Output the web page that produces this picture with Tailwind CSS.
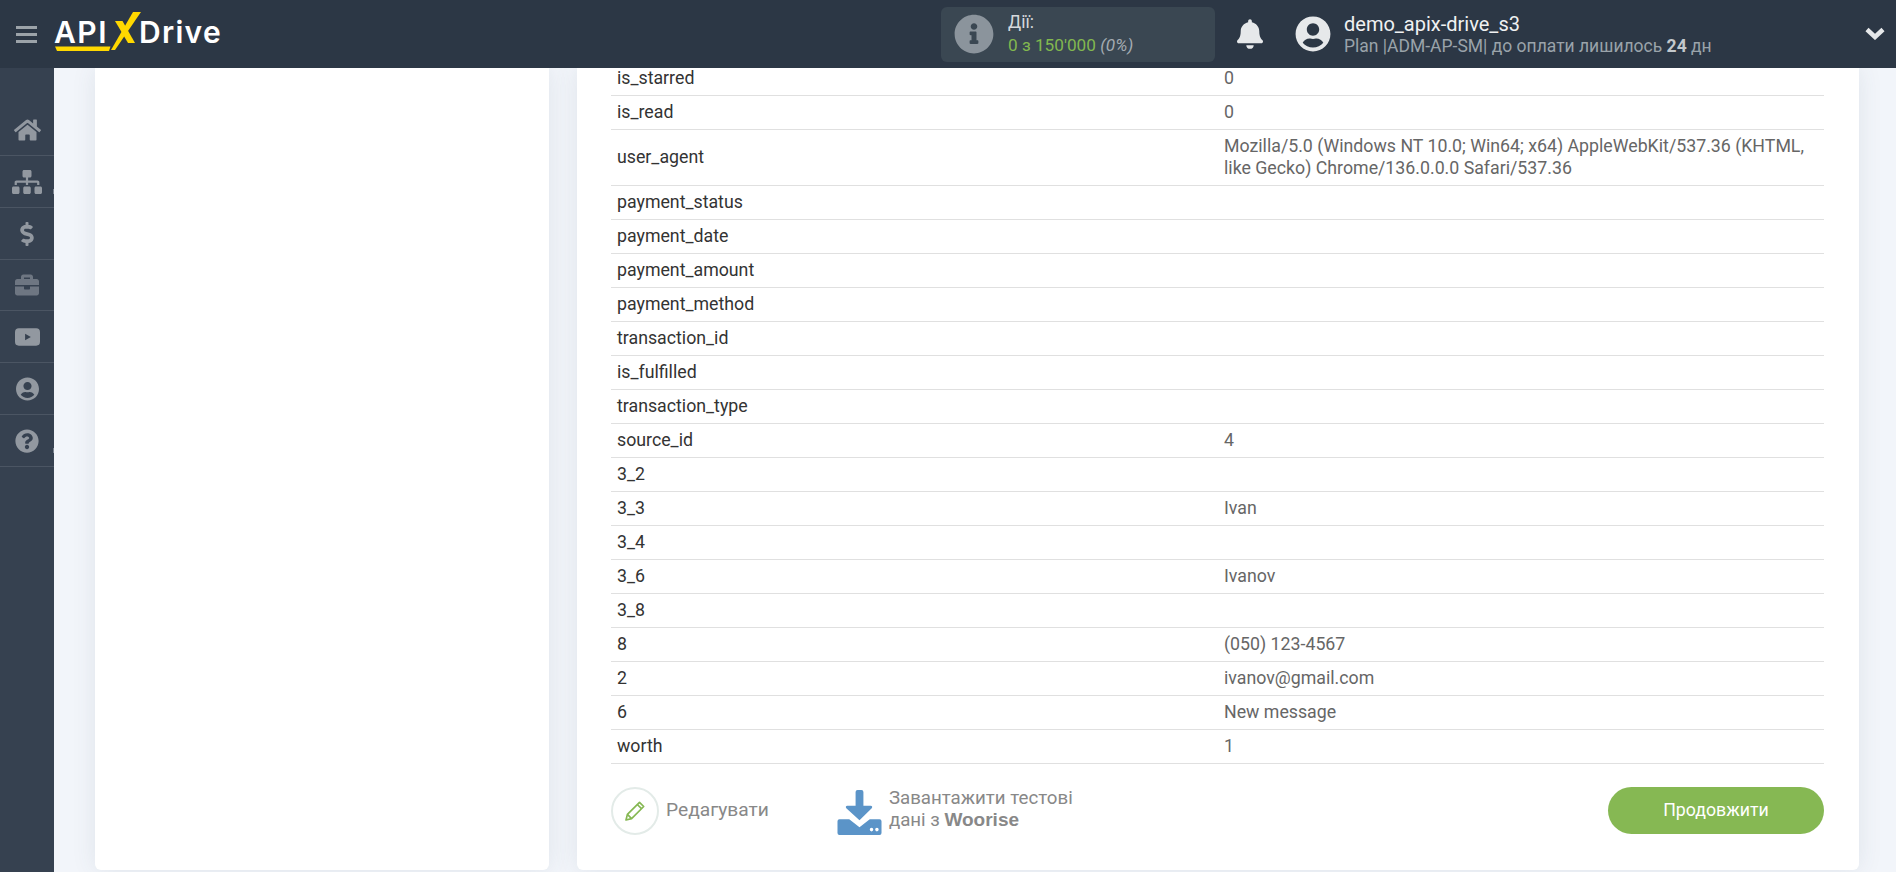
<!DOCTYPE html>
<html lang="uk">
<head>
    <meta charset="UTF-8">
    <title>ApiX-Drive</title>
    <script src="https://cdn.jsdelivr.net/npm/@tailwindcss/browser@4"></script>
</head>
<body class="h-[872px] overflow-hidden bg-[#f2f5fa] font-['Roboto',sans-serif] text-[16px]">

    <!-- Header -->
    <header class="h-[68px] bg-[#2c3745] flex items-center relative z-10">
        <div class="w-[54px] flex justify-center">
            <div class="w-[21px] flex flex-col gap-[4px] -ml-[1px]">
                <span class="block h-[3px] bg-[#9ca3a9]"></span>
                <span class="block h-[3px] bg-[#9ca3a9]"></span>
                <span class="block h-[3px] bg-[#9ca3a9]"></span>
            </div>
        </div>
        <!-- Logo -->
        <div class="relative w-[170px] h-[68px]">
            <span class="absolute left-0 top-[14px] font-['Inter',sans-serif] font-semibold text-[30px] leading-[36px] tracking-[1.5px] text-white">API</span>
            <span class="absolute left-[85px] top-[14px] font-['Inter',sans-serif] font-semibold text-[30px] leading-[36px] tracking-[1.300px] text-white">Drive</span>
            <svg class="absolute left-0 top-0" width="100" height="68" viewBox="0 0 100 68">
                <path d="M1 46.500H56.500L55 51H3z" fill="#ffd800"/>
                <path d="M57 50L79 12h8L61 50z" fill="#ffd800"/>
                <path d="M61 21h7.500L81 43h-7z" fill="#ffd800"/>
            </svg>
        </div>

        <!-- Actions counter -->
        <div class="ml-[717px] w-[274px] h-[55px] bg-[#3a4752] rounded-[6px] flex items-center pl-[13px]">
            <svg class="w-[40px] h-[40px]" viewBox="0 0 512 512" fill="#8b949c"><path d="M256 8C119.043 8 8 119.083 8 256c0 136.997 111.043 248 248 248s248-111.003 248-248C504 119.083 392.957 8 256 8zm0 110c23.196 0 42 18.804 42 42s-18.804 42-42 42-42-18.804-42-42 18.804-42 42-42zm56 254c0 6.627-5.373 12-12 12h-88c-6.627 0-12-5.373-12-12v-24c0-6.627 5.373-12 12-12h12v-64h-12c-6.627 0-12-5.373-12-12v-24c0-6.627 5.373-12 12-12h64c6.627 0 12 5.373 12 12v100h12c6.627 0 12 5.373 12 12v24z"/></svg>
            <div class="ml-[14px]">
                <div class="text-[17.500px] leading-[23px] text-[#d5d9dc]">Дії:</div>
                <div class="text-[17.200px] leading-[23px] text-[#82b84f]">0 з 150'000 <span class="italic text-[#a3abb1]">(0%)</span></div>
            </div>
        </div>

        <!-- Bell -->
        <svg class="ml-[22px] w-[26px] h-[30px]" viewBox="0 0 448 512" fill="#e6e8ea"><path d="M224 512c35.32 0 63.97-28.65 63.97-64H160.03c0 35.35 28.65 64 63.97 64zm215.39-149.71c-19.32-20.76-55.47-51.99-55.47-154.29 0-77.7-54.48-139.9-127.94-155.16V32c0-17.67-14.32-32-31.98-32s-31.98 14.33-31.98 32v20.84C118.56 68.1 64.08 130.3 64.08 208c0 102.3-36.15 133.53-55.47 154.29-6 6.45-8.66 14.16-8.61 21.71.11 16.4 12.98 32 32.1 32h383.8c19.12 0 32-15.6 32.1-32 .05-7.55-2.61-15.27-8.61-21.71z"/></svg>

        <!-- User -->
        <svg class="ml-[32px] w-[36px] h-[36px]" viewBox="0 0 496 512" fill="#e6e8ea"><path d="M248 8C111 8 0 119 0 256s111 248 248 248 248-111 248-248S385 8 248 8zm0 96c48.6 0 88 39.4 88 88s-39.4 88-88 88-88-39.4-88-88 39.4-88 88-88zm0 344c-58.7 0-111.3-26.6-146.5-68.2 18.8-35.4 55.6-59.8 98.5-59.8 2.4 0 4.8.4 7.1 1.1 13 4.2 26.6 6.9 40.9 6.9 14.3 0 28-2.7 40.9-6.9 2.3-.7 4.7-1.1 7.1-1.1 42.9 0 79.7 24.4 98.5 59.8C359.3 421.4 306.7 448 248 448z"/></svg>
        <div class="ml-[13px]">
            <div class="text-[20px] leading-[24px] text-[#f0f1f2]">demo_apix-drive_s3</div>
            <div class="text-[17.500px] leading-[21px] text-[#9aa3aa]">Plan |ADM-AP-SM| до оплати лишилось <b class="text-[#c3c8cc]">24</b> дн</div>
        </div>
        <svg class="absolute left-[1865px] top-[27px] w-[20px] h-[13px]" viewBox="0 0 20 13" fill="none" stroke="#e6e8ea" stroke-width="4.5"><path d="M2 2.5l8 7.5 8-7.5"/></svg>
    </header>

    <div class="flex h-[804px]">
        <!-- Sidebar -->
        <aside class="w-[54px] shrink-0 bg-[#364150] pt-[36px]">
            <div class="h-[52px] border-b border-[#4b5563] flex items-center justify-center">
                <svg class="w-[27px] h-[24px]" viewBox="0 0 576 512" fill="#9298a0"><path d="M280.37 148.26L96 300.11V464a16 16 0 0 0 16 16l112.06-.29a16 16 0 0 0 15.92-16V368a16 16 0 0 1 16-16h64a16 16 0 0 1 16 16v95.64a16 16 0 0 0 16 16.05L464 480a16 16 0 0 0 16-16V300L295.67 148.26a12.19 12.19 0 0 0-15.3 0zM571.6 251.47L488 182.56V44.05a12 12 0 0 0-12-12h-56a12 12 0 0 0-12 12v72.61L318.47 43a48 48 0 0 0-61 0L4.34 251.47a12 12 0 0 0-1.6 16.9l25.5 31A12 12 0 0 0 45.15 301l235.22-193.74a12.19 12.19 0 0 1 15.3 0L530.9 301a12 12 0 0 0 16.9-1.6l25.5-31a12 12 0 0 0-1.7-16.93z"/></svg>
            </div>
            <div class="relative h-[52px] border-b border-[#4b5563] flex items-center justify-center">
                <svg class="w-[30px] h-[24px]" viewBox="0 0 640 512" fill="#9298a0"><path d="M128 352H32c-17.67 0-32 14.33-32 32v96c0 17.67 14.33 32 32 32h96c17.67 0 32-14.33 32-32v-96c0-17.67-14.33-32-32-32zm-24-80h192v48h48v-48h192v48h48v-57.59c0-21.17-17.23-38.41-38.41-38.41H344v-64h40c17.67 0 32-14.33 32-32V32c0-17.67-14.33-32-32-32H256c-17.67 0-32 14.33-32 32v96c0 17.67 14.33 32 32 32h40v64H94.41C73.23 224 56 241.23 56 262.41V320h48v-48zm264 80h-96c-17.67 0-32 14.33-32 32v96c0 17.67 14.33 32 32 32h96c17.67 0 32-14.33 32-32v-96c0-17.67-14.33-32-32-32zm240 0h-96c-17.67 0-32 14.33-32 32v96c0 17.67 14.33 32 32 32h96c17.67 0 32-14.33 32-32v-96c0-17.67-14.33-32-32-32z"/></svg>
                <span class="absolute right-0 top-[33px] w-[1px] h-[5px] bg-[#7b8490]"></span>
            </div>
            <div class="h-[52px] border-b border-[#4b5563] flex items-center justify-center">
                <svg class="w-[14px] h-[24px]" viewBox="0 0 288 512" fill="#9298a0"><path d="M209.2 233.4l-108-31.6C88.7 198.2 80 186.5 80 173.5c0-16.3 13.2-29.5 29.5-29.5h66.3c12.2 0 24.2 3.7 34.2 10.5 6.1 4.1 14.3 3.1 19.5-2l34.8-34c7.1-6.9 6.1-18.4-1.8-24.5C238 74.8 207.4 64.1 176 64V16c0-8.8-7.2-16-16-16h-32c-8.8 0-16 7.2-16 16v48h-2.5C45.8 64-5.4 118.7.5 183.6c4.2 46.1 39.4 83.6 83.8 96.6l102.5 30c12.5 3.7 21.2 15.3 21.2 28.3 0 16.3-13.2 29.5-29.5 29.5h-66.3C100 368 88 364.3 78 357.5c-6.1-4.1-14.3-3.1-19.5 2l-34.8 34c-7.1 6.9-6.1 18.4 1.8 24.5 24.5 19.2 55.1 29.9 86.5 30v48c0 8.8 7.2 16 16 16h32c8.8 0 16-7.2 16-16v-48.2c46.6-.9 90.3-28.6 105.7-72.7 21.5-61.6-14.6-124.8-72.5-141.7z"/></svg>
            </div>
            <div class="h-[51px] border-b border-[#4b5563] flex items-center justify-center">
                <svg class="w-[24px] h-[24px]" viewBox="0 0 512 512" fill="#6e7682"><path d="M320 336c0 8.84-7.16 16-16 16h-96c-8.84 0-16-7.16-16-16v-48H0v144c0 25.6 22.4 48 48 48h416c25.6 0 48-22.4 48-48V288H320v48zm144-208h-80V80c0-25.6-22.4-48-48-48H176c-25.6 0-48 22.4-48 48v48H48c-25.6 0-48 22.4-48 48v80h512v-80c0-25.6-22.4-48-48-48zm-144 0H192V96h128v32z"/></svg>
            </div>
            <div class="h-[52px] border-b border-[#4b5563] flex items-center justify-center">
                <svg class="w-[25px] h-[18px]" viewBox="0 0 26 18" fill="#9298a0"><path fill-rule="evenodd" d="M4 0h18a4 4 0 0 1 4 4v10a4 4 0 0 1-4 4H4a4 4 0 0 1-4-4V4a4 4 0 0 1 4-4zm6.500 5.500v7l6-3.500z"/></svg>
            </div>
            <div class="h-[52px] border-b border-[#4b5563] flex items-center justify-center">
                <svg class="w-[23px] h-[24px]" viewBox="0 0 496 512" fill="#9298a0"><path d="M248 8C111 8 0 119 0 256s111 248 248 248 248-111 248-248S385 8 248 8zm0 96c48.6 0 88 39.4 88 88s-39.4 88-88 88-88-39.4-88-88 39.4-88 88-88zm0 344c-58.7 0-111.3-26.6-146.5-68.2 18.8-35.4 55.6-59.8 98.5-59.8 2.4 0 4.8.4 7.1 1.1 13 4.2 26.6 6.9 40.9 6.9 14.3 0 28-2.7 40.9-6.9 2.3-.7 4.7-1.1 7.1-1.1 42.9 0 79.7 24.4 98.5 59.8C359.3 421.4 306.7 448 248 448z"/></svg>
            </div>
            <div class="relative h-[52px] border-b border-[#4b5563] flex items-center justify-center">
                <svg class="w-[24px] h-[24px]" viewBox="0 0 512 512" fill="#9298a0"><path d="M504 256c0 136.997-111.043 248-248 248S8 392.997 8 256C8 119.083 119.043 8 256 8s248 111.083 248 248zM262.655 90c-54.497 0-89.255 22.957-116.549 63.758-3.536 5.286-2.353 12.415 2.715 16.258l34.699 26.31c5.205 3.947 12.621 3.008 16.665-2.122 17.864-22.658 30.113-35.797 57.303-35.797 20.429 0 45.698 13.148 45.698 32.958 0 14.976-12.363 22.667-32.534 33.976C247.128 238.528 216 254.941 216 296v4c0 6.627 5.373 12 12 12h56c6.627 0 12-5.373 12-12v-1.333c0-28.462 83.186-29.647 83.186-106.667 0-58.002-60.165-102-116.531-102zM256 338c-25.365 0-46 20.635-46 46 0 25.364 20.635 46 46 46s46-20.636 46-46c0-25.365-20.635-46-46-46z"/></svg>
                <span class="absolute right-0 top-[33px] w-[1px] h-[5px] bg-[#7b8490]"></span>
            </div>
        </aside>

        <!-- Content (scrolled) -->
        <main class="flex-1 flex gap-[28px] pl-[41px] pr-[37px] pb-[2px]">
            <div class="w-[454px] bg-white rounded-b-[6px] shadow-[0_0_24px_rgba(60,80,100,0.10)]"></div>

            <div class="flex-1 bg-white rounded-b-[6px] pl-[34px] pr-[35px] overflow-hidden shadow-[0_0_24px_rgba(60,80,100,0.10)]">
                <table class="w-full table-fixed -mt-[7px] text-[17.750px] leading-[22.500px] text-[#666]">
                    <colgroup><col class="w-[607px]"><col></colgroup>
                    <tbody>
                        <tr class="h-[34px] border-b border-[#e0e0e0]"><td class="px-[6px] text-[#333]">is_starred</td><td class="px-[6px]">0</td></tr>
                        <tr class="h-[34px] border-b border-[#e0e0e0]"><td class="px-[6px] text-[#333]">is_read</td><td class="px-[6px]">0</td></tr>
                        <tr class="border-b border-[#e0e0e0]"><td class="px-[6px] py-[5px] text-[#333]">user_agent</td><td class="px-[6px] py-[5px]">Mozilla/5.0 (Windows NT 10.0; Win64; x64) AppleWebKit/537.36 (KHTML, like Gecko) Chrome/136.0.0.0 Safari/537.36</td></tr>
                        <tr class="h-[34px] border-b border-[#e0e0e0]"><td class="px-[6px] text-[#333]">payment_status</td><td class="px-[6px]"></td></tr>
                        <tr class="h-[34px] border-b border-[#e0e0e0]"><td class="px-[6px] text-[#333]">payment_date</td><td class="px-[6px]"></td></tr>
                        <tr class="h-[34px] border-b border-[#e0e0e0]"><td class="px-[6px] text-[#333]">payment_amount</td><td class="px-[6px]"></td></tr>
                        <tr class="h-[34px] border-b border-[#e0e0e0]"><td class="px-[6px] text-[#333]">payment_method</td><td class="px-[6px]"></td></tr>
                        <tr class="h-[34px] border-b border-[#e0e0e0]"><td class="px-[6px] text-[#333]">transaction_id</td><td class="px-[6px]"></td></tr>
                        <tr class="h-[34px] border-b border-[#e0e0e0]"><td class="px-[6px] text-[#333]">is_fulfilled</td><td class="px-[6px]"></td></tr>
                        <tr class="h-[34px] border-b border-[#e0e0e0]"><td class="px-[6px] text-[#333]">transaction_type</td><td class="px-[6px]"></td></tr>
                        <tr class="h-[34px] border-b border-[#e0e0e0]"><td class="px-[6px] text-[#333]">source_id</td><td class="px-[6px]">4</td></tr>
                        <tr class="h-[34px] border-b border-[#e0e0e0]"><td class="px-[6px] text-[#333]">3_2</td><td class="px-[6px]"></td></tr>
                        <tr class="h-[34px] border-b border-[#e0e0e0]"><td class="px-[6px] text-[#333]">3_3</td><td class="px-[6px]">Ivan</td></tr>
                        <tr class="h-[34px] border-b border-[#e0e0e0]"><td class="px-[6px] text-[#333]">3_4</td><td class="px-[6px]"></td></tr>
                        <tr class="h-[34px] border-b border-[#e0e0e0]"><td class="px-[6px] text-[#333]">3_6</td><td class="px-[6px]">Ivanov</td></tr>
                        <tr class="h-[34px] border-b border-[#e0e0e0]"><td class="px-[6px] text-[#333]">3_8</td><td class="px-[6px]"></td></tr>
                        <tr class="h-[34px] border-b border-[#e0e0e0]"><td class="px-[6px] text-[#333]">8</td><td class="px-[6px]">(050) 123-4567</td></tr>
                        <tr class="h-[34px] border-b border-[#e0e0e0]"><td class="px-[6px] text-[#333]">2</td><td class="px-[6px]">ivanov@gmail.com</td></tr>
                        <tr class="h-[34px] border-b border-[#e0e0e0]"><td class="px-[6px] text-[#333]">6</td><td class="px-[6px]">New message</td></tr>
                        <tr class="h-[34px] border-b border-[#e0e0e0]"><td class="px-[6px] text-[#333]">worth</td><td class="px-[6px]">1</td></tr>
                    </tbody>
                </table>

                <!-- Actions -->
                <div class="flex items-center mt-[23px]">
                    <div class="w-[48px] h-[48px] rounded-full border-2 border-[#e3ebe8] flex items-center justify-center">
                        <svg class="w-[22px] h-[22px]" viewBox="0 0 22 22" fill="none" stroke="#86b853" stroke-width="1.7" stroke-linejoin="round"><path d="M2 20l1.4-5.6L15.5 2.3l4.200 4.200L7.600 18.600z"/><path d="M13.300 4.500l4.200 4.200M3.400 14.400l4.200 4.200"/></svg>
                    </div>
                    <span class="ml-[7px] text-[19.200px] text-[#888]">Редагувати</span>

                    <svg class="ml-[68px] mt-[3px] w-[45px] h-[45px]" viewBox="0 0 45 46" fill="#5b94c8"><path d="M18.500 2a2 2 0 0 1 2-2h4a2 2 0 0 1 2 2v14h7.500a1.500 1.500 0 0 1 1 2.600L22.500 31 9 18.600a1.500 1.500 0 0 1 1-2.600h8.500z"/><path fill-rule="evenodd" d="M2 30h10l10.500 8L33 30h10a2 2 0 0 1 2 2v12a2 2 0 0 1-2 2H2a2 2 0 0 1-2-2V32a2 2 0 0 1 2-2zm31 10.500a1.800 1.800 0 1 0 3.600 0 1.800 1.800 0 1 0-3.600 0zm5.500 0a1.800 1.800 0 1 0 3.600 0 1.800 1.800 0 1 0-3.600 0z"/></svg>
                    <div class="ml-[7px] -mt-[2px] text-[18.700px] leading-[21px] text-[#888]">
                        <div>Завантажити тестові</div>
                        <div>дані з <b class="font-['Liberation_Sans',sans-serif] text-[19px]">Woorise</b></div>
                    </div>

                    <button class="ml-auto w-[216px] h-[47px] rounded-full bg-[#86b853] text-white text-[17.750px]">Продовжити</button>
                </div>
            </div>
        </main>
    </div>
</body>
</html>
